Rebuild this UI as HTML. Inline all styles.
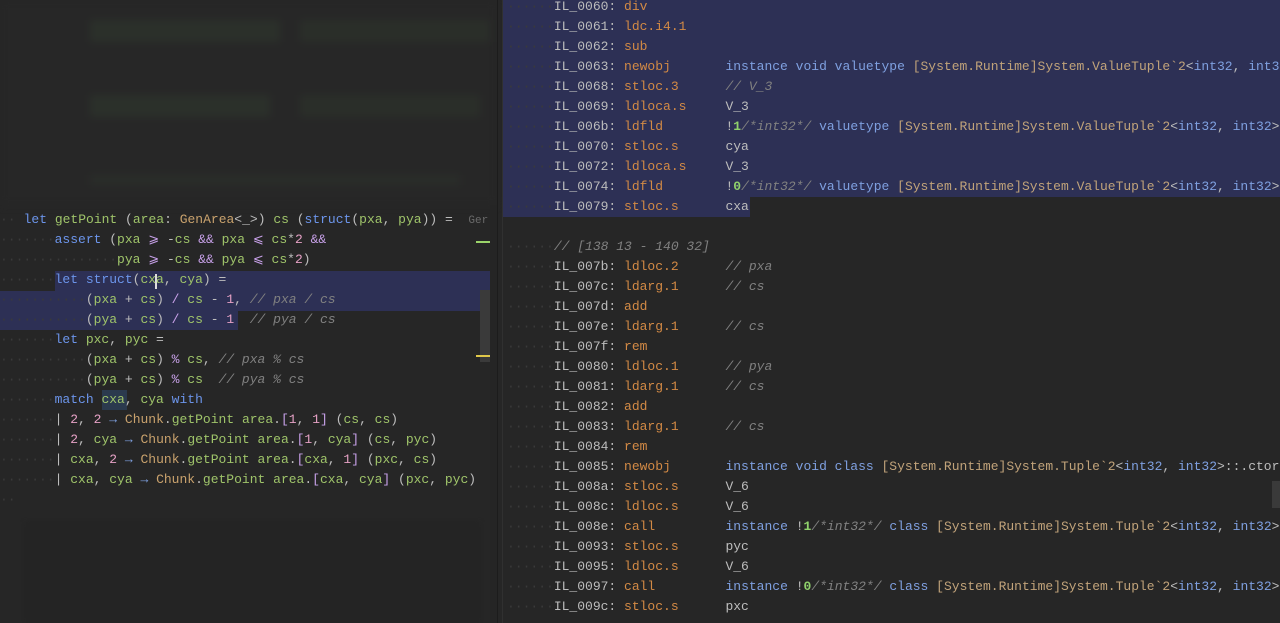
<!DOCTYPE html>
<html><head><meta charset="utf-8"><style>
*{margin:0;padding:0;box-sizing:border-box}
body{width:1280px;height:623px;background:#262626;overflow:hidden;position:relative;font-family:"Liberation Mono",monospace;font-size:13px;color:#bdbdbd}
.l{position:absolute;white-space:pre;height:20px;line-height:20px}
.k{color:#6c95eb}.g{color:#9fc46a}.t{color:#c9a26d}.p{color:#c7a0e8}.n{color:#e5a1c5}.c{color:#808080;font-style:italic}.o{color:#d38a45}.d{color:#3a3a3a}.w{color:#bdbdbd}.b{color:#7fa0e0}.y{color:#c1a37a}.gn{color:#8fd16b;font-weight:bold}
.sel{position:absolute;background:#2d3055}
</style></head><body>
<div style="position:absolute;left:0;top:0;width:497px;height:205px;background:#272727;filter:blur(4px)">
<div style="position:absolute;left:90px;top:20px;width:190px;height:22px;background:#2b302a"></div>
<div style="position:absolute;left:300px;top:20px;width:190px;height:22px;background:#2a2e29"></div>
<div style="position:absolute;left:90px;top:95px;width:180px;height:22px;background:#2b302a"></div>
<div style="position:absolute;left:300px;top:95px;width:180px;height:22px;background:#2a2e29"></div>
<div style="position:absolute;left:90px;top:175px;width:370px;height:10px;background:#2a2d29"></div>
</div>
<div style="position:absolute;left:25px;top:522px;width:455px;height:101px;background:#242424;filter:blur(2px)"></div>
<div style="position:absolute;left:490px;top:205px;width:7px;height:418px;background:#252525"></div>
<div style="position:absolute;left:497px;top:0;width:1px;height:623px;background:#1c1c1c"></div>
<div style="position:absolute;left:502px;top:0;width:1px;height:623px;background:#303030"></div>
<div class="sel" style="left:55px;top:271px;width:435px;height:20px"></div>
<div class="sel" style="left:0;top:291px;width:490px;height:20px"></div>
<div class="sel" style="left:0;top:311px;width:238px;height:19px"></div>
<div class="sel" style="left:102px;top:390px;width:25px;height:20px;background:#2b3a4e"></div>
<div style="position:absolute;left:155px;top:274px;width:2px;height:15px;background:#ddd"></div>
<div style="position:absolute;left:480px;top:290px;width:10px;height:72px;background:#3a3a3a"></div>
<div style="position:absolute;left:476px;top:241px;width:14px;height:2px;background:#9bd46a"></div>
<div style="position:absolute;left:476px;top:355px;width:14px;height:2px;background:#e0c84a"></div>
<div class="l" style="left:0;top:210px"><span class="d">··</span><span class="w" style="padding-left:8px"></span><span class="k">let</span> <span class="g">getPoint</span> (<span class="g">area</span>: <span class="t">GenArea</span>&lt;_&gt;) <span class="g">cs</span> (<span class="k">struct</span>(<span class="g">pxa</span>, <span class="g">pya</span>)) =  <span style="color:#6a6a6a;font-size:11px">Ger</span></div>
<div class="l" style="left:0;top:230px"><span class="d">·······</span><span class="k">assert</span> (<span class="g">pxa</span> <span class="p">⩾</span> -<span class="g">cs</span> <span class="p">&amp;&amp;</span> <span class="g">pxa</span> <span class="p">⩽</span> <span class="g">cs</span>*<span class="n">2</span> <span class="p">&amp;&amp;</span></div>
<div class="l" style="left:0;top:250px"><span class="d">···············</span><span class="g">pya</span> <span class="p">⩾</span> -<span class="g">cs</span> <span class="p">&amp;&amp;</span> <span class="g">pya</span> <span class="p">⩽</span> <span class="g">cs</span>*<span class="n">2</span>)</div>
<div class="l" style="left:0;top:270px"><span class="d">·······</span><span class="k">let</span> <span class="k">struct</span>(<span class="g">cxa</span>, <span class="g">cya</span>) =</div>
<div class="l" style="left:0;top:290px"><span class="d">···········</span>(<span class="g">pxa</span> + <span class="g">cs</span>) <span class="p">/</span> <span class="g">cs</span> - <span class="n">1</span>, <span class="c">// pxa / cs</span></div>
<div class="l" style="left:0;top:310px"><span class="d">···········</span>(<span class="g">pya</span> + <span class="g">cs</span>) <span class="p">/</span> <span class="g">cs</span> - <span class="n">1</span>  <span class="c">// pya / cs</span></div>
<div class="l" style="left:0;top:330px"><span class="d">·······</span><span class="k">let</span> <span class="g">pxc</span>, <span class="g">pyc</span> =</div>
<div class="l" style="left:0;top:350px"><span class="d">···········</span>(<span class="g">pxa</span> + <span class="g">cs</span>) <span class="p">%</span> <span class="g">cs</span>, <span class="c">// pxa % cs</span></div>
<div class="l" style="left:0;top:370px"><span class="d">···········</span>(<span class="g">pya</span> + <span class="g">cs</span>) <span class="p">%</span> <span class="g">cs</span>  <span class="c">// pya % cs</span></div>
<div class="l" style="left:0;top:390px"><span class="d">·······</span><span class="k">match</span> <span class="g">cxa</span>, <span class="g">cya</span> <span class="k">with</span></div>
<div class="l" style="left:0;top:410px"><span class="d">·······</span>| <span class="n">2</span>, <span class="n">2</span> <span class="b">→</span> <span class="t">Chunk</span>.<span class="g">getPoint</span> <span class="g">area</span>.<span class="p">[</span><span class="n">1</span>, <span class="n">1</span><span class="p">]</span> (<span class="g">cs</span>, <span class="g">cs</span>)</div>
<div class="l" style="left:0;top:430px"><span class="d">·······</span>| <span class="n">2</span>, <span class="g">cya</span> <span class="b">→</span> <span class="t">Chunk</span>.<span class="g">getPoint</span> <span class="g">area</span>.<span class="p">[</span><span class="n">1</span>, <span class="g">cya</span><span class="p">]</span> (<span class="g">cs</span>, <span class="g">pyc</span>)</div>
<div class="l" style="left:0;top:450px"><span class="d">·······</span>| <span class="g">cxa</span>, <span class="n">2</span> <span class="b">→</span> <span class="t">Chunk</span>.<span class="g">getPoint</span> <span class="g">area</span>.<span class="p">[</span><span class="g">cxa</span>, <span class="n">1</span><span class="p">]</span> (<span class="g">pxc</span>, <span class="g">cs</span>)</div>
<div class="l" style="left:0;top:470px;width:490px;overflow:hidden"><span class="d">·······</span>| <span class="g">cxa</span>, <span class="g">cya</span> <span class="b">→</span> <span class="t">Chunk</span>.<span class="g">getPoint</span> <span class="g">area</span>.<span class="p">[</span><span class="g">cxa</span>, <span class="g">cya</span><span class="p">]</span> (<span class="g">pxc</span>, <span class="g">pyc</span>)</div>
<div class="l" style="left:0;top:490px"><span class="d">··</span></div>
<div class="sel" style="left:503px;top:0;width:777px;height:197px"></div>
<div class="sel" style="left:503px;top:197px;width:247px;height:20px"></div>
<div style="position:absolute;left:1272px;top:481px;width:8px;height:27px;background:#3a3a3a"></div>
<div id="r" style="position:absolute;left:507px;top:-3px">
<div class="l" style="top:0"><span class="d">······</span>IL_0060: <span class="o">div</span></div>
<div class="l" style="top:20px"><span class="d">······</span>IL_0061: <span class="o">ldc.i4.1</span></div>
<div class="l" style="top:40px"><span class="d">······</span>IL_0062: <span class="o">sub</span></div>
<div class="l" style="top:60px"><span class="d">······</span>IL_0063: <span class="o">newobj</span>       <span class="b">instance void valuetype</span> <span class="y">[System.Runtime]System.ValueTuple`2</span>&lt;<span class="b">int32</span>, <span class="b">int32</span>&gt;</div>
<div class="l" style="top:80px"><span class="d">······</span>IL_0068: <span class="o">stloc.3</span>      <span class="c">// V_3</span></div>
<div class="l" style="top:100px"><span class="d">······</span>IL_0069: <span class="o">ldloca.s</span>     V_3</div>
<div class="l" style="top:120px"><span class="d">······</span>IL_006b: <span class="o">ldfld</span>        !<span class="gn">1</span><span class="c">/*int32*/</span> <span class="b">valuetype</span> <span class="y">[System.Runtime]System.ValueTuple`2</span>&lt;<span class="b">int32</span>, <span class="b">int32</span>&gt;</div>
<div class="l" style="top:140px"><span class="d">······</span>IL_0070: <span class="o">stloc.s</span>      cya</div>
<div class="l" style="top:160px"><span class="d">······</span>IL_0072: <span class="o">ldloca.s</span>     V_3</div>
<div class="l" style="top:180px"><span class="d">······</span>IL_0074: <span class="o">ldfld</span>        !<span class="gn">0</span><span class="c">/*int32*/</span> <span class="b">valuetype</span> <span class="y">[System.Runtime]System.ValueTuple`2</span>&lt;<span class="b">int32</span>, <span class="b">int32</span>&gt;</div>
<div class="l" style="top:200px"><span class="d">······</span>IL_0079: <span class="o">stloc.s</span>      cxa</div>
<div class="l" style="top:240px"><span class="d">······</span><span class="c">// [138 13 - 140 32]</span></div>
<div class="l" style="top:260px"><span class="d">······</span>IL_007b: <span class="o">ldloc.2</span>      <span class="c">// pxa</span></div>
<div class="l" style="top:280px"><span class="d">······</span>IL_007c: <span class="o">ldarg.1</span>      <span class="c">// cs</span></div>
<div class="l" style="top:300px"><span class="d">······</span>IL_007d: <span class="o">add</span></div>
<div class="l" style="top:320px"><span class="d">······</span>IL_007e: <span class="o">ldarg.1</span>      <span class="c">// cs</span></div>
<div class="l" style="top:340px"><span class="d">······</span>IL_007f: <span class="o">rem</span></div>
<div class="l" style="top:360px"><span class="d">······</span>IL_0080: <span class="o">ldloc.1</span>      <span class="c">// pya</span></div>
<div class="l" style="top:380px"><span class="d">······</span>IL_0081: <span class="o">ldarg.1</span>      <span class="c">// cs</span></div>
<div class="l" style="top:400px"><span class="d">······</span>IL_0082: <span class="o">add</span></div>
<div class="l" style="top:420px"><span class="d">······</span>IL_0083: <span class="o">ldarg.1</span>      <span class="c">// cs</span></div>
<div class="l" style="top:440px"><span class="d">······</span>IL_0084: <span class="o">rem</span></div>
<div class="l" style="top:460px"><span class="d">······</span>IL_0085: <span class="o">newobj</span>       <span class="b">instance void class</span> <span class="y">[System.Runtime]System.Tuple`2</span>&lt;<span class="b">int32</span>, <span class="b">int32</span>&gt;::.ctor</div>
<div class="l" style="top:480px"><span class="d">······</span>IL_008a: <span class="o">stloc.s</span>      V_6</div>
<div class="l" style="top:500px"><span class="d">······</span>IL_008c: <span class="o">ldloc.s</span>      V_6</div>
<div class="l" style="top:520px"><span class="d">······</span>IL_008e: <span class="o">call</span>         <span class="b">instance</span> !<span class="gn">1</span><span class="c">/*int32*/</span> <span class="b">class</span> <span class="y">[System.Runtime]System.Tuple`2</span>&lt;<span class="b">int32</span>, <span class="b">int32</span>&gt;</div>
<div class="l" style="top:540px"><span class="d">······</span>IL_0093: <span class="o">stloc.s</span>      pyc</div>
<div class="l" style="top:560px"><span class="d">······</span>IL_0095: <span class="o">ldloc.s</span>      V_6</div>
<div class="l" style="top:580px"><span class="d">······</span>IL_0097: <span class="o">call</span>         <span class="b">instance</span> !<span class="gn">0</span><span class="c">/*int32*/</span> <span class="b">class</span> <span class="y">[System.Runtime]System.Tuple`2</span>&lt;<span class="b">int32</span>, <span class="b">int32</span>&gt;</div>
<div class="l" style="top:600px"><span class="d">······</span>IL_009c: <span class="o">stloc.s</span>      pxc</div>
</div>
</body></html>
